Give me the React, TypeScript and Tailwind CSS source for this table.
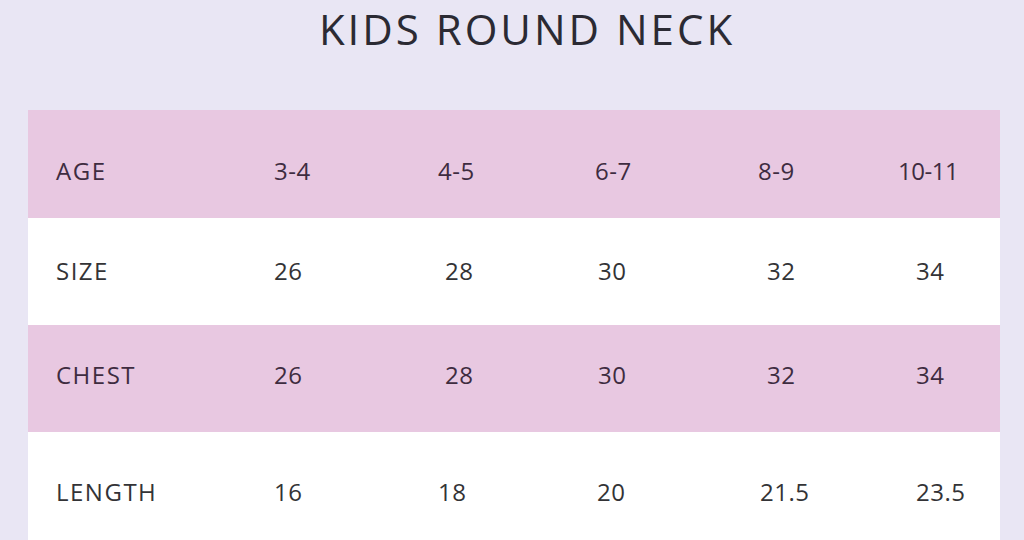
const ROWS = [
  {
    label: "AGE",
    bg: "bg-[#e8c8e1]",
    text: "text-[#3e2c40]",
    h: "h-[108px]",
    pt: "pt-[47px]",
    cells: [
      { v: "3-4", cls: "pl-0" },
      { v: "4-5", cls: "pl-0" },
      { v: "6-7", cls: "pl-0" },
      { v: "8-9", cls: "pl-0" },
      { v: "10-11", cls: "pl-0 tracking-[-0.5px]" },
    ],
  },
  {
    label: "SIZE",
    bg: "bg-white",
    text: "text-[#333336]",
    h: "h-[107px]",
    pt: "pt-[39px]",
    cells: [
      { v: "26", cls: "pl-0" },
      { v: "28", cls: "pl-[7px]" },
      { v: "30", cls: "pl-[3px]" },
      { v: "32", cls: "pl-[9px]" },
      { v: "34", cls: "pl-[18px]" },
    ],
  },
  {
    label: "CHEST",
    bg: "bg-[#e8c8e1]",
    text: "text-[#3e2c40]",
    h: "h-[107px]",
    pt: "pt-[36px]",
    cells: [
      { v: "26", cls: "pl-0" },
      { v: "28", cls: "pl-[7px]" },
      { v: "30", cls: "pl-[3px]" },
      { v: "32", cls: "pl-[9px]" },
      { v: "34", cls: "pl-[18px]" },
    ],
  },
  {
    label: "LENGTH",
    bg: "bg-white",
    text: "text-[#333336]",
    h: "h-[108px]",
    pt: "pt-[46px]",
    cells: [
      { v: "16", cls: "pl-0" },
      { v: "18", cls: "pl-0" },
      { v: "20", cls: "pl-[2px]" },
      { v: "21.5", cls: "pl-[2px]" },
      { v: "23.5", cls: "pl-[18px]" },
    ],
  },
];

export default function App() {
  return (
    <div className="h-[540px] w-[1024px] overflow-hidden bg-[#e9e6f4] font-['Open_Sans',sans-serif]">
      <h1 className="pt-0 pl-[30px] text-center text-[42px] leading-[58px] font-normal tracking-[3px] text-[#2b2a33]">
        KIDS ROUND NECK
      </h1>

      <div className="mx-[28px] mt-[52px] w-[972px]">
        {ROWS.map((row) => (
          <div
            key={row.label}
            className={`grid grid-cols-[246px_164px_157px_163px_140px_102px] ${row.h} ${row.pt} ${row.bg} ${row.text} text-[24px] leading-[28px] tracking-[0.5px]`}
          >
            <span className="pl-[28px] tracking-[1.5px]">{row.label}</span>
            {row.cells.map((c, i) => (
              <span key={i} className={c.cls}>
                {c.v}
              </span>
            ))}
          </div>
        ))}
      </div>
    </div>
  );
}
